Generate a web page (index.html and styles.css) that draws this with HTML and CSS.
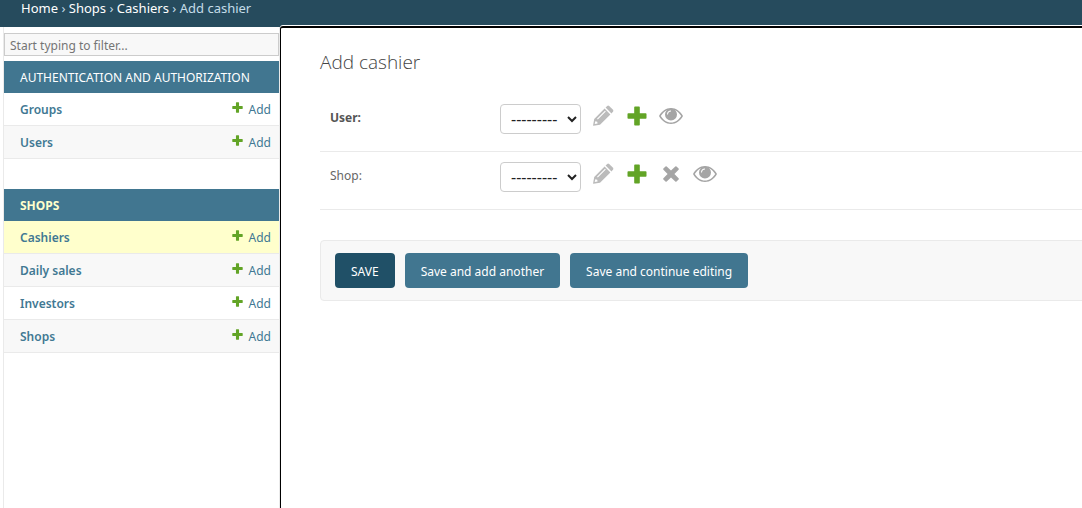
FILE: index.html
```html
<!DOCTYPE html>
<html lang="en">
<head>
<meta charset="utf-8">
<title>Add cashier</title>
<link rel="stylesheet" href="styles.css">
</head>
<body>
<svg class="defs" aria-hidden="true">
  <symbol id="plus" viewBox="0 0 20 20"><path d="M8 0.500h4q.8 0 .8.800v5.900h5.900q.8 0 .8.800v4q0 .8-.8.800h-5.900v5.900q0 .8-.8.800H8q-.8 0-.8-.8v-5.900H1.300q-.8 0-.8-.8V8q0-.8.8-.8h5.900V1.300Q7.200.5 8 .5z"/></symbol>
  <symbol id="pencil" viewBox="0 0 22 22"><path fill-rule="evenodd" d="M2.200 14 12.600 3.600l5.800 5.800L8 19.800l-6.500 1q-.5 0-.4-.6zM3.300 16.300l-.6 2.700 2.900-.6-.4-1.700zM13 5.800 5 13.800l.8.800 8-8z"/><path d="m13.600 2.600 1.600-1.600q1-.8 2 0l3.800 3.800q.8 1 0 2l-1.600 1.600z"/></symbol>
  <symbol id="eye" viewBox="0 0 24 16"><path fill-rule="evenodd" d="M12 0C17 0 21.500 3.500 24 8c-2.500 4.500-7 8-12 8S2.500 12.500 0 8C2.500 3.500 7 0 12 0zm0 1.500C7.800 1.500 4 4.200 1.800 8c2.200 3.800 6 6.500 10.200 6.500S20 11.800 22.200 8C20 4.200 16.200 1.500 12 1.500z"/><path fill-rule="evenodd" d="M12 .6a6 6 0 1 1 0 12A6 6 0 0 1 12 .6zm0 1.900C9.800 2.400 8 4 8 6.400h1C9.100 4.700 10.300 3.500 12 3.500z"/></symbol>
  <symbol id="cross" viewBox="0 0 16 16"><path d="M3.700.4 8 4.600 12.300.4q.6-.5 1.200 0l2.100 2.100q.5.600 0 1.200L11.400 8l4.200 4.300q.5.600 0 1.200l-2.100 2.100q-.6.500-1.200 0L8 11.400l-4.300 4.200q-.6.500-1.200 0L.4 13.500q-.5-.6 0-1.200L4.600 8 .4 3.700q-.5-.6 0-1.200L2.500.4q.6-.5 1.200 0z"/></symbol>
</svg>
<nav class="breadcrumbs" aria-label="Breadcrumbs">
  <a href="#home">Home</a> › <a href="#shops">Shops</a> › <a href="#cashiers">Cashiers</a> › Add cashier
</nav>
<div class="layout">
  <nav class="sidebar" aria-label="Sidebar">
    <input class="filter" type="search" placeholder="Start typing to filter..." aria-label="Filter navigation items">
    <table class="module">
      <caption><a href="#auth">Authentication and Authorization</a></caption>
      <tr><th scope="row"><a href="#groups">Groups</a></th><td><a class="add" href="#add-group"><svg><use href="#plus"/></svg>Add</a></td></tr>
      <tr><th scope="row"><a href="#users">Users</a></th><td><a class="add" href="#add-user"><svg><use href="#plus"/></svg>Add</a></td></tr>
    </table>
    <table class="module current-app">
      <caption><a href="#shops-app">Shops</a></caption>
      <tr class="current"><th scope="row"><a href="#cashiers">Cashiers</a></th><td><a class="add" href="#add-cashier"><svg><use href="#plus"/></svg>Add</a></td></tr>
      <tr><th scope="row"><a href="#daily">Daily sales</a></th><td><a class="add" href="#add-daily"><svg><use href="#plus"/></svg>Add</a></td></tr>
      <tr><th scope="row"><a href="#investors">Investors</a></th><td><a class="add" href="#add-investor"><svg><use href="#plus"/></svg>Add</a></td></tr>
      <tr><th scope="row"><a href="#shops">Shops</a></th><td><a class="add" href="#add-shop"><svg><use href="#plus"/></svg>Add</a></td></tr>
    </table>
  </nav>
  <main class="main">
    <h1>Add cashier</h1>
    <form>
      <div class="form-row">
        <label class="required" for="user">User:</label>
        <select id="user"><option>---------</option></select>
        <div class="actions">
          <a class="muted" href="#change-user" aria-label="Change user"><svg class="pencil"><use href="#pencil"/></svg></a>
          <a class="create" href="#create-user" aria-label="Add user"><svg class="plus"><use href="#plus"/></svg></a>
          <a href="#view-user" aria-label="View user"><svg class="eye"><use href="#eye"/></svg></a>
        </div>
      </div>
      <div class="form-row">
        <label for="shop">Shop:</label>
        <select id="shop"><option>---------</option></select>
        <div class="actions">
          <a class="muted" href="#change-shop" aria-label="Change shop"><svg class="pencil"><use href="#pencil"/></svg></a>
          <a class="create" href="#create-shop" aria-label="Add shop"><svg class="plus"><use href="#plus"/></svg></a>
          <a href="#delete-shop" aria-label="Delete shop"><svg class="cross"><use href="#cross"/></svg></a>
          <a href="#view-shop" aria-label="View shop"><svg class="eye"><use href="#eye"/></svg></a>
        </div>
      </div>
      <div class="submit-row">
        <button class="save" type="submit">SAVE</button>
        <button type="submit">Save and add another</button>
        <button type="submit">Save and continue editing</button>
      </div>
    </form>
  </main>
</div>
</body>
</html>
```
FILE: styles.css
```css
* { box-sizing: border-box; }
body {
  margin: 0;
  min-height: 100vh;
  display: flex;
  flex-direction: column;
  background: #fff;
  color: #666;
  font: 13px/16px "Noto Sans", "Open Sans", sans-serif;
  overflow-x: hidden;
}
.defs { display: none; }
svg { fill: currentColor; display: block; }
a { color: #417893; text-decoration: none; }
.breadcrumbs {
  padding: 0 21px 11px;
  background: #264b5d;
  color: #c4dce8;
}
.breadcrumbs a { color: #fff; }
.layout { flex: 1; display: flex; }
.sidebar {
  flex: 0 0 277px;
  margin-left: 3px;
  padding-top: 6px;
  border-left: 1px solid #eaeaea;
  border-right: 1px solid #eaeaea;
}
.filter {
  display: block;
  width: 100%;
  height: 23px;
  margin-bottom: 5px;
  padding: 2px 5px 0;
  border: 1px solid #ccc;
  border-radius: 0;
  background: #f8f8f8;
  color: #333;
  font: 12px/16px "Noto Sans", "Open Sans", sans-serif;
  appearance: none;
}
.filter::placeholder { color: #757575; }
.module {
  width: 100%;
  margin-bottom: 30px;
  border-collapse: separate;
  border-spacing: 0;
  font-size: 12px;
}
.module caption {
  padding: 9px 16px 7px;
  background: #417690;
  text-align: left;
  text-transform: uppercase;
}
.module caption a { color: #fff; }
.current-app caption a { color: #ffc; font-weight: 700; }
.module th, .module td {
  padding: 9px 16px 7px;
  border-bottom: 1px solid #eaeaea;
  text-align: left;
  font-weight: 600;
}
.module td { padding: 9px 8px 7px; font-weight: 400; }
.module tr:nth-child(even) { background: #f8f8f8; }
.module tr.current { background: #ffc; }
.add { display: flex; justify-content: flex-end; gap: 6px; }
.add svg { width: 11px; height: 11px; color: #62a426; }
.main {
  flex: 1;
  min-width: 0;
  margin-top: -1px;
  padding: 22px 0 0 39px;
  background: #fff;
  border-top: 2px solid #000;
  border-left: 1px solid #000;
  border-top-left-radius: 3px;
  box-shadow: 0 -1px #fff;
}
h1 {
  margin: 0 0 20px;
  font: 300 19px/24px "Open Sans", "Noto Sans", sans-serif;
  color: #444;
}
.form-row {
  display: flex;
  align-items: flex-start;
  height: 58px;
  padding: 10px;
  border-bottom: 1px solid #eaeaea;
}
.form-row label { width: 170px; padding-top: 6px; font-size: 12px; }
.form-row .required { color: #555; font-weight: 700; }
.form-row select {
  width: 81px;
  height: 30px;
  padding: 0 0 0 6px;
  border: 1px solid #ccc;
  border-radius: 4px;
  background: #fff;
  color: #222;
  font: 16px/16px "Noto Sans", "Open Sans", sans-serif;
}
.actions { display: flex; margin-left: 5px; }
.actions a {
  width: 34px;
  height: 24px;
  display: flex;
  align-items: center;
  justify-content: center;
  color: #a5a5a5;
}
.actions .muted { color: #bbb; }
.actions .create { color: #62a426; }
.pencil { width: 22px; height: 22px; }
.plus { width: 20px; height: 20px; }
.eye { width: 24px; height: 16px; }
.cross { width: 16px; height: 16px; }
.submit-row {
  display: flex;
  gap: 10px;
  margin-top: 30px;
  margin-right: -10px;
  padding: 12px 14px;
  background: #f8f8f8;
  border: 1px solid #eaeaea;
  border-radius: 4px;
}
button {
  height: 35px;
  padding: 2px 16px 0;
  border: 0;
  border-radius: 4px;
  background: #417690;
  color: #fff;
  font: 12px/16px "Noto Sans", "Open Sans", sans-serif;
}
.save { background: #205067; }
```
